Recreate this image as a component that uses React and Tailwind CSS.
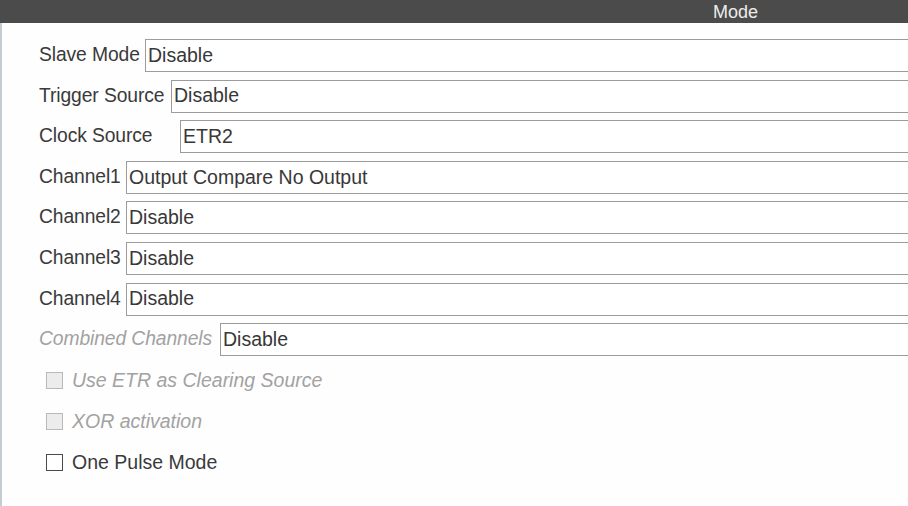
const rows = [
  { label: "Slave Mode", value: "Disable", w: "w-[106px]" },
  { label: "Trigger Source", value: "Disable", w: "w-[132px]" },
  { label: "Clock Source", value: "ETR2", w: "w-[141px]" },
  { label: "Channel1", value: "Output Compare No Output", w: "w-[87px]" },
  { label: "Channel2", value: "Disable", w: "w-[87px]" },
  { label: "Channel3", value: "Disable", w: "w-[87px]" },
  { label: "Channel4", value: "Disable", w: "w-[87px]" },
  { label: "Combined Channels", value: "Disable", w: "w-[181px]", disabled: true },
];

const checks = [
  { label: "Use ETR as Clearing Source", disabled: true },
  { label: "XOR activation", disabled: true },
  { label: "One Pulse Mode" },
];

const App = () => (
  <div className="h-[506px] w-[908px] overflow-hidden bg-[#fefefe] font-['Liberation_Sans',Arial,sans-serif]">
    <div className="flex h-[23px] items-center bg-[#4b4b4b] pl-[713px] text-[18px] leading-none text-[#ececec]">Mode</div>
    <div className="h-[483px] border-l-[2px] border-[#c3cdd4] pl-[37px] pt-[16px]">
      <div className="flex flex-col gap-[7.6px]">
        {rows.map((row) => (
          <div key={row.label} className="flex h-[33px] items-center">
            <span
              className={`${row.w} shrink-0 whitespace-nowrap text-[19.3px] tracking-[-0.1px] ${
                row.disabled ? "italic text-[#a2a2a2]" : "text-[#3a3a3a]"
              }`}
            >
              {row.label}
            </span>
            <div className="flex h-[33px] flex-1 items-center whitespace-nowrap border border-r-0 border-[#9c9c9c] bg-white pl-[2px] text-[19.5px] text-[#383838]">
              {row.value}
            </div>
          </div>
        ))}
      </div>
      <div className="mt-[16px] flex flex-col gap-[24px] pl-[7px]">
        {checks.map((c) => (
          <label key={c.label} className="flex h-[17px] items-center gap-[9px]">
            <span
              className={`h-[17px] w-[17px] shrink-0 border-[1.5px] ${
                c.disabled ? "border-[#b9b9b9] bg-[#ececec]" : "border-[#4a4a4a] bg-white"
              }`}
            />
            <span className={`whitespace-nowrap text-[19.5px] ${c.disabled ? "italic text-[#a2a2a2]" : "text-[#3a3a3a]"}`}>
              {c.label}
            </span>
          </label>
        ))}
      </div>
    </div>
  </div>
);

export default App;
